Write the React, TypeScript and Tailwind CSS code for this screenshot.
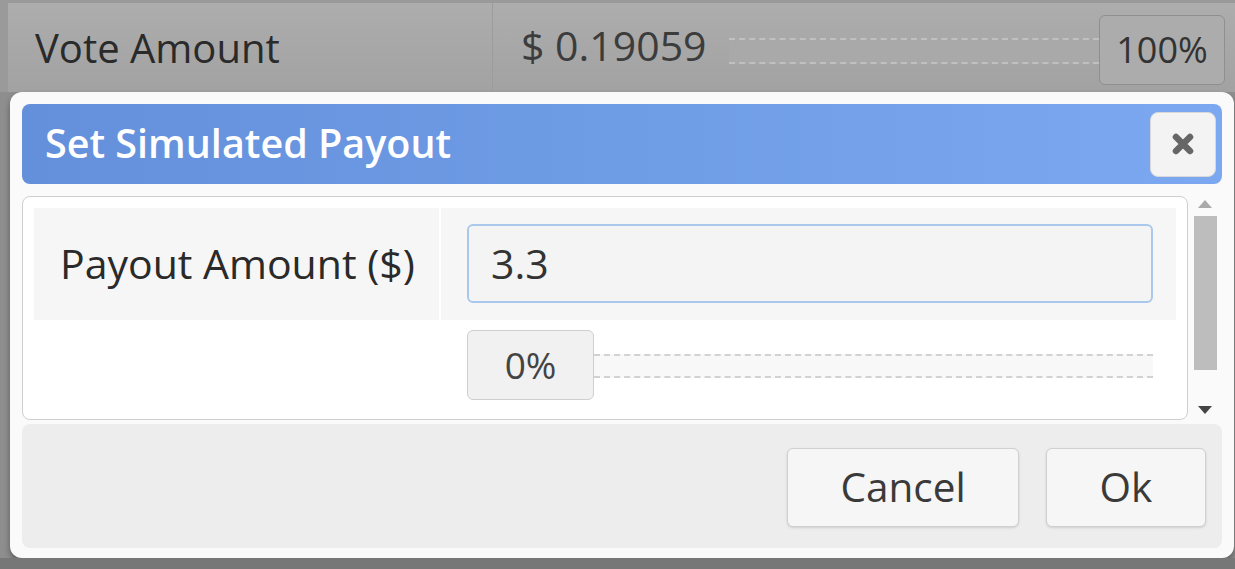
import React from 'react';

const font = { fontFamily: '"Open Sans", "DejaVu Sans", sans-serif' };

function DashedTrack({ className }: { className: string }) {
  return <div className={`border-y-2 border-dashed ${className}`} />;
}

export default function App() {
  return (
    <div className="w-[1235px] h-[569px] overflow-hidden bg-[#8e8e8e] flex flex-col" style={font}>
      {/* Background row behind the modal */}
      <div className="h-[92px] flex pl-[8px] pt-[3px] bg-[#9a9a9a]">
        <div className="flex-1 flex bg-gradient-to-b from-[#adadad] to-[#a2a2a2]">
          <div className="w-[485px] flex items-center pl-[27px] border-r border-[#9c9c9c] text-[40px] text-[#2a2a2a]">
            Vote Amount
          </div>
          <div className="flex-1 flex items-start pl-[28px] pr-[9px]">
            <span className="mt-[17px] w-[208px] text-[41px] text-[#3c3c3c] leading-[50px]">$ 0.19059</span>
            <DashedTrack className="mt-[35px] w-[370px] h-[26px] border-[#c0c0c0] bg-[#a9a9a9]" />
            <div className="mt-[12px] w-[126px] h-[70px] rounded-md border border-[#8f8f8f] bg-[#acacac] flex items-center justify-center text-[36px] text-[#333]">
              100%
            </div>
          </div>
        </div>
      </div>

      {/* Modal */}
      <div className="ml-[10px] mr-[1px] h-[466px] rounded-xl bg-[#fafafa] p-[12px] pb-[10px] flex flex-col shadow-[0_4px_6px_rgba(0,0,0,0.35)]">
        <div className="h-[80px] shrink-0 rounded-lg bg-gradient-to-r from-[#6490db] to-[#7ba8f1] flex items-center justify-between pl-[23px] pr-[6px]">
          <span className="text-[39.5px] font-semibold text-white leading-none">Set Simulated Payout</span>
          <button className="w-[66px] h-[65px] rounded-lg bg-[#f3f3f3] border border-[#d8d8d8] flex items-center justify-center">
            <svg width="24" height="24" viewBox="0 0 24 24">
              <path d="M5 5 L19 19 M19 5 L5 19" stroke="#666" strokeWidth="6.5" strokeLinecap="round" />
            </svg>
          </button>
        </div>

        <div className="mt-[12px] h-[224px] flex">
          <div className="w-[1166px] rounded-lg border border-[#cfcfcf] bg-white p-[11px] flex flex-col">
            <div className="h-[112px] flex bg-[#f6f6f6]">
              <div className="w-[405px] flex items-center pl-[26px] text-[41px] text-[#2a2a2a]">Payout Amount ($)</div>
              <div className="w-[2px] bg-white" />
              <div className="flex-1 pl-[26px] pr-[23px] pt-[16px]">
                <div className="h-[79px] rounded-md border-2 border-[#a9c8ec] bg-[#f4f4f4] flex items-center pl-[22px] text-[41px] text-[#333]">
                  3.3
                </div>
              </div>
            </div>
            <div className="flex-1 flex pl-[433px] pr-[23px] pt-[10px]">
              <div className="w-[127px] h-[70px] rounded-md border border-[#cfcfcf] bg-[#f1f1f1] flex items-center justify-center text-[37px] text-[#444]">
                0%
              </div>
              <DashedTrack className="flex-1 mt-[24px] h-[24px] border-[#d2d2d2] bg-[#f8f8f8]" />
            </div>
          </div>
          {/* Scrollbar */}
          <div className="w-[34px] flex flex-col items-center pt-[4px] pb-[6px]">
            <svg width="14" height="8" viewBox="0 0 14 8"><path d="M0 8 L7 0 L14 8 Z" fill="#aaa" /></svg>
            <div className="mt-[8px] w-[23px] h-[154px] bg-[#bdbdbd]" />
            <div className="flex-1" />
            <svg width="14" height="8" viewBox="0 0 14 8"><path d="M0 0 L14 0 L7 8 Z" fill="#444" /></svg>
          </div>
        </div>

        <div className="mt-[4px] flex-1 rounded-lg bg-[#ededed] flex justify-end items-start pt-[24px] pr-[16px] gap-[27px]">
          <button className="w-[232px] h-[79px] rounded-md border border-[#d0d0d0] bg-[#f6f6f6] shadow-sm text-[40.5px] text-[#3a3a3a]">
            Cancel
          </button>
          <button className="w-[160px] h-[79px] rounded-md border border-[#d0d0d0] bg-[#f6f6f6] shadow-sm text-[40.5px] text-[#3a3a3a]">
            Ok
          </button>
        </div>
      </div>
      <div className="flex-1 bg-[#777]" />
    </div>
  );
}
